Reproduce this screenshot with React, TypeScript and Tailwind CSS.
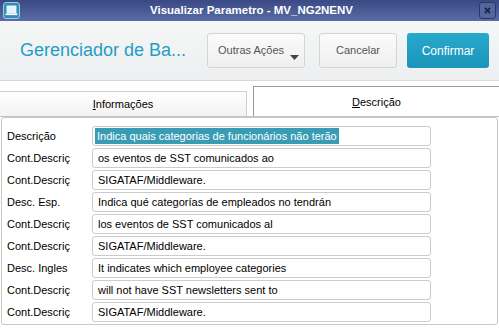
import React from "react";

const rows: { label: string; value: string; selected?: boolean }[] = [
  { label: "Descrição", value: "Indica quais categorias de funcionários não terão", selected: true },
  { label: "Cont.Descriç", value: "os eventos de SST comunicados ao" },
  { label: "Cont.Descriç", value: "SIGATAF/Middleware." },
  { label: "Desc. Esp.", value: "Indica qué categorías de empleados no tendrán" },
  { label: "Cont.Descriç", value: "los eventos de SST comunicados al" },
  { label: "Cont.Descriç", value: "SIGATAF/Middleware." },
  { label: "Desc. Ingles", value: "It indicates which employee categories" },
  { label: "Cont.Descriç", value: "will not have SST newsletters sent to" },
  { label: "Cont.Descriç", value: "SIGATAF/Middleware." },
];

export default function App() {
  return (
    <div
      className="w-[499px] h-[328px] bg-white overflow-hidden flex flex-col"
      style={{ fontFamily: '"Liberation Sans", Arial, sans-serif' }}
    >
      {/* Title bar */}
      <div className="h-[21px] flex items-center bg-gradient-to-b from-[#3a4984] to-[#5a6ca6] px-[3px]">
        <div className="w-[17px] h-[17px] rounded-[3px] border border-[#a9c6dc] bg-[#2f8fb8] flex items-center justify-center">
          <svg width="13" height="11" viewBox="0 0 13 11">
            <rect x="2" y="1" width="9" height="7" fill="#dff1fa" stroke="#ffffff" strokeWidth="0.8" />
            <rect x="0.5" y="8.5" width="12" height="1.6" fill="#ffffff" />
          </svg>
        </div>
        <div className="flex-1 text-center text-white font-bold text-[11.5px] leading-none pl-[4px]">
          Visualizar Parametro - MV_NG2NENV
        </div>
        <div className="w-[17px] h-[17px] rounded-[3px] border border-[#2c3766] bg-[#5466a0] flex items-center justify-center">
          <svg width="7" height="7" viewBox="0 0 7 7">
            <path d="M1 1 L6 6 M6 1 L1 6" stroke="#1e2544" strokeWidth="1.8" />
          </svg>
        </div>
      </div>

      {/* Header */}
      <div className="h-[60px] flex items-center bg-gradient-to-b from-[#f5f6f6] to-[#eeeff0] border-b border-[#d9d9d9]">
        <div className="pl-[20px] w-[207px] text-[18px] text-[#1f9ec6] leading-none pb-[1px]">
          Gerenciador de Ba...
        </div>
        <div className="relative h-[35px] w-[98px] rounded-[3px] border border-[#d4d4d4] bg-gradient-to-b from-[#fbfbfb] to-[#efefef] flex items-center pl-[10px] text-[11px] text-[#555]">
          Outras Ações
          <svg className="absolute right-[5px] bottom-[7px]" width="9" height="5" viewBox="0 0 9 5">
            <path d="M0 0 L9 0 L4.5 5 Z" fill="#444" />
          </svg>
        </div>
        <div className="ml-[14px] h-[35px] w-[78px] rounded-[3px] border border-[#d4d4d4] bg-gradient-to-b from-[#fbfbfb] to-[#efefef] flex items-center justify-center text-[11px] text-[#555]">
          Cancelar
        </div>
        <div className="ml-[10px] h-[35px] w-[82px] rounded-[3px] bg-gradient-to-b from-[#27a9cc] to-[#1a95b8] flex items-center justify-center text-[12px] text-white">
          Confirmar
        </div>
      </div>

      {/* Tabs */}
      <div className="h-[36px] flex items-end relative">
        <div className="w-[247px] h-[26px] bg-gradient-to-b from-[#ffffff] to-[#f2f2f2] border-t border-r border-[#cfcfcf] flex items-center justify-center text-[11px] text-black">
          <span>
            <span className="underline">I</span>nformações
          </span>
        </div>
        <div className="ml-[6px] w-[246px] h-[31px] bg-white border-t border-l border-[#9a9a9a] flex items-center justify-center text-[11px] text-black">
          <span>
            <span className="underline">D</span>escrição
          </span>
        </div>
        <div className="absolute left-0 right-0 bottom-0 h-[1px] bg-[#c4c4c4]" />
      </div>

      {/* Panel */}
      <div className="mx-[1px] h-[208px] border border-[#c9c9c9] rounded-[3px] pt-[8px] flex flex-col gap-[2px]">
        {rows.map((r, i) => (
          <div key={i} className="flex items-center h-[20px]">
            <div className="w-[90px] pl-[5px] text-[11px] text-black">{r.label}</div>
            <div className="w-[339px] h-[20px] border border-[#cccccc] rounded-[3px] flex items-center pl-[2px] text-[11px] text-black">
              {r.selected ? (
                <span className="bg-[#3a9cb4] text-white px-[2px]">{r.value}</span>
              ) : (
                <span className="px-[3px]">{r.value}</span>
              )}
            </div>
          </div>
        ))}
      </div>
    </div>
  );
}
